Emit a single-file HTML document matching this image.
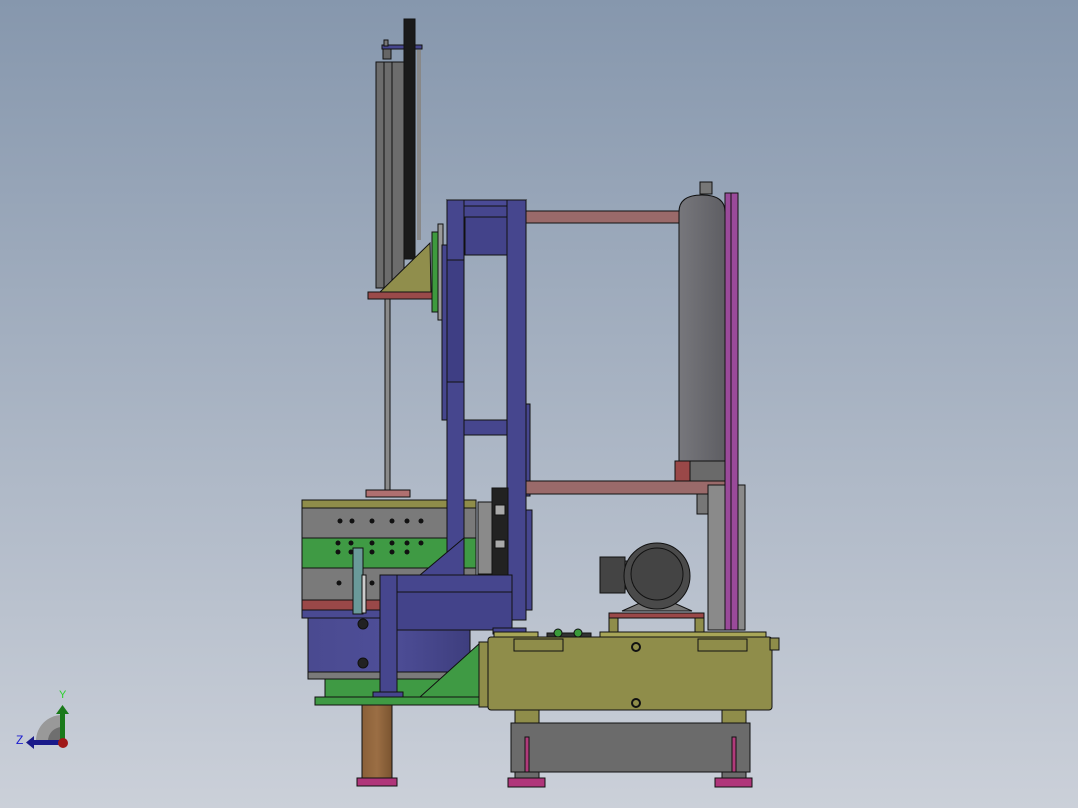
<!DOCTYPE html>
<html><head><meta charset="utf-8"><style>
html,body{margin:0;padding:0;width:1078px;height:808px;overflow:hidden}
svg{display:block}
</style></head><body>
<svg width="1078" height="808" viewBox="0 0 1078 808" xmlns="http://www.w3.org/2000/svg" stroke="#111" stroke-width="1">
<defs>
<linearGradient id="bg" x1="0" y1="0" x2="0" y2="1"><stop offset="0" stop-color="#8697ad"/><stop offset="1" stop-color="#cbd0d9"/></linearGradient>
<linearGradient id="tank" x1="0" y1="0" x2="1" y2="0"><stop offset="0" stop-color="#77777c"/><stop offset="1" stop-color="#5e5e63"/></linearGradient>
<linearGradient id="drum" x1="0" y1="0" x2="1" y2="0"><stop offset="0" stop-color="#4a4a90"/><stop offset="0.5" stop-color="#4e4e98"/><stop offset="1" stop-color="#3e3e7e"/></linearGradient>
<linearGradient id="gray" x1="0" y1="0" x2="1" y2="0"><stop offset="0" stop-color="#6a6a6a"/><stop offset="0.5" stop-color="#7a7a7a"/><stop offset="1" stop-color="#6a6a6a"/></linearGradient>
<linearGradient id="brown" x1="0" y1="0" x2="1" y2="0"><stop offset="0" stop-color="#8a6038"/><stop offset="0.5" stop-color="#9b6e44"/><stop offset="1" stop-color="#7a5430"/></linearGradient>
</defs>
<rect width="1078" height="808" fill="url(#bg)" stroke="none"/>

<!-- cylinder group -->
<rect x="382" y="45" width="40" height="4" fill="#46468e"/>
<rect x="384" y="40" width="4" height="6" fill="#777"/>
<rect x="383" y="49" width="8" height="10" fill="#666"/>
<rect x="376" y="62" width="28" height="226" fill="#6c6c6c"/>
<line x1="384" y1="62" x2="384" y2="288"/><line x1="392" y1="62" x2="392" y2="288"/>
<rect x="404" y="19" width="11" height="240" fill="#1a1a1a"/>
<rect x="417" y="50" width="4" height="190" fill="#888" stroke="none"/>
<rect x="385" y="298" width="5" height="192" fill="#8a8a8a"/>
<polygon points="380,292 430,243 431,292" fill="#908e4c"/>
<rect x="368" y="292" width="64" height="7" fill="#9a4a4a"/>
<rect x="432" y="232" width="6" height="80" fill="#3e9a3e"/>
<rect x="438" y="224" width="5" height="96" fill="#999"/>

<!-- left drum -->
<rect x="366" y="490" width="44" height="7" fill="#b07070"/>
<rect x="302" y="500" width="174" height="8" fill="#8f8d4a"/>
<rect x="302" y="508" width="174" height="30" fill="#7a7a7a"/>
<rect x="302" y="538" width="174" height="30" fill="#3f9a44"/>
<rect x="302" y="568" width="174" height="32" fill="#7a7a7a"/>
<rect x="302" y="600" width="174" height="10" fill="#9a4848"/>
<rect x="302" y="610" width="174" height="8" fill="#4a4a92"/>
<g fill="#111" stroke="none">
<circle cx="340" cy="521" r="2.5"/><circle cx="352" cy="521" r="2.5"/><circle cx="372" cy="521" r="2.5"/><circle cx="392" cy="521" r="2.5"/><circle cx="407" cy="521" r="2.5"/><circle cx="421" cy="521" r="2.5"/>
<circle cx="338" cy="543" r="2.5"/><circle cx="351" cy="543" r="2.5"/><circle cx="372" cy="543" r="2.5"/><circle cx="392" cy="543" r="2.5"/><circle cx="407" cy="543" r="2.5"/><circle cx="421" cy="543" r="2.5"/>
<circle cx="338" cy="552" r="2.5"/><circle cx="351" cy="552" r="2.5"/><circle cx="372" cy="552" r="2.5"/><circle cx="392" cy="552" r="2.5"/><circle cx="407" cy="552" r="2.5"/>
<circle cx="339" cy="583" r="2.5"/><circle cx="372" cy="583" r="2.5"/>
</g>
<rect x="308" y="618" width="162" height="54" fill="url(#drum)"/>
<circle cx="363" cy="624" r="5" fill="#222"/><circle cx="363" cy="663" r="5" fill="#222"/>
<rect x="308" y="672" width="162" height="7" fill="#7a7a7a"/>
<rect x="325" y="679" width="125" height="18" fill="#3f9a44"/>
<rect x="315" y="697" width="170" height="8" fill="#3f9a44"/>
<rect x="353" y="548" width="10" height="66" fill="#6a9a9a"/>
<rect x="362" y="575" width="4" height="38" fill="#ccc"/>
<rect x="362" y="705" width="30" height="75" fill="url(#brown)"/>
<rect x="357" y="778" width="40" height="8" fill="#b0357a"/>

<!-- blue frame -->
<rect x="447" y="200" width="79" height="55" fill="#46468e"/>
<polygon points="447,200 526,200 520,206 453,206" fill="#4a4a96"/>
<rect x="465" y="217" width="42" height="38" fill="#43438a"/>
<rect x="447" y="200" width="17" height="420" fill="#46468e"/>
<rect x="507" y="200" width="19" height="420" fill="#46468e"/>
<line x1="464" y1="255" x2="464" y2="575"/><line x1="507" y1="255" x2="507" y2="575"/>
<rect x="447" y="260" width="17" height="122" fill="#3e3e84"/>
<rect x="442" y="245" width="5" height="175" fill="#46468e"/>
<rect x="464" y="420" width="43" height="15" fill="#46468e"/>
<rect x="526" y="404" width="4" height="92" fill="#46468e"/>
<rect x="526" y="510" width="6" height="100" fill="#46468e"/>
<!-- black/gray brackets -->
<rect x="478" y="502" width="16" height="72" fill="#8a8a8a"/>
<rect x="492" y="488" width="16" height="88" fill="#222"/>
<rect x="495" y="505" width="10" height="10" fill="#aaa"/><rect x="495" y="540" width="10" height="8" fill="#aaa"/>

<!-- blue L structure -->
<polygon points="420,575 464,538 464,575" fill="#46468e"/>
<rect x="380" y="575" width="132" height="55" fill="#46468e"/>
<rect x="397" y="592" width="115" height="38" fill="#43438a"/>
<rect x="380" y="575" width="17" height="120" fill="#46468e"/>
<rect x="373" y="692" width="30" height="5" fill="#46468e"/>
<rect x="493" y="628" width="33" height="6" fill="#46468e"/>
<polygon points="420,697 480,643 488,643 488,697" fill="#3f9a44"/>

<!-- pink beams & tank -->
<rect x="526" y="211" width="199" height="12" fill="#9a6a6a"/>
<rect x="526" y="481" width="199" height="13" fill="#9a6a6a"/>
<rect x="700" y="182" width="12" height="12" fill="#777"/>
<path d="M679,212 Q679,195 702,195 Q725,195 725,212 L725,481 L679,481 Z" fill="url(#tank)"/>
<rect x="690" y="461" width="35" height="20" fill="#6a6a6a"/>
<rect x="675" y="461" width="15" height="20" fill="#9a4848"/>
<rect x="697" y="494" width="28" height="20" fill="#777"/>
<rect x="708" y="485" width="37" height="145" fill="#8a8a8a"/>
<rect x="725" y="193" width="13" height="437" fill="#9a4a9a"/>
<line x1="731" y1="193" x2="731" y2="630"/>

<!-- motor -->
<rect x="609" y="613" width="95" height="5" fill="#9a4848"/>
<rect x="609" y="618" width="9" height="16" fill="#8f8d4a"/><rect x="695" y="618" width="9" height="16" fill="#8f8d4a"/>
<polygon points="622,611 640,603 674,603 692,611" fill="#777"/>
<rect x="600" y="557" width="25" height="36" fill="#444"/>
<rect x="625" y="561" width="4" height="28" fill="#555"/>
<circle cx="657" cy="576" r="33" fill="#4a4a4a"/>
<circle cx="657" cy="574" r="26" fill="#444"/>

<!-- yellow tank -->
<rect x="494" y="632" width="44" height="8" fill="#a8a658"/>
<rect x="547" y="633" width="44" height="6" fill="#333"/>
<circle cx="558" cy="633" r="4" fill="#3a9a3a"/><circle cx="578" cy="633" r="4" fill="#3a9a3a"/>
<rect x="600" y="632" width="166" height="8" fill="#a8a658"/>
<rect x="479" y="642" width="10" height="65" fill="#8f8d4a"/>
<rect x="488" y="637" width="284" height="73" fill="#8f8d4a" rx="3"/>
<rect x="514" y="639" width="49" height="12" fill="#8f8d4a"/>
<rect x="698" y="639" width="49" height="12" fill="#8f8d4a"/>
<rect x="770" y="638" width="9" height="12" fill="#8f8d4a"/>
<circle cx="636" cy="647" r="4" fill="none" stroke-width="2"/>
<circle cx="636" cy="703" r="4" fill="none" stroke-width="2"/>

<!-- lower frame -->
<rect x="515" y="710" width="24" height="13" fill="#8f8d4a"/><rect x="722" y="710" width="24" height="13" fill="#8f8d4a"/>
<rect x="511" y="723" width="239" height="49" fill="#6b6b6b"/>
<rect x="525" y="737" width="4" height="35" fill="#b03a7a"/><rect x="732" y="737" width="4" height="35" fill="#b03a7a"/>
<rect x="515" y="772" width="24" height="8" fill="#6b6b6b"/><rect x="722" y="772" width="24" height="8" fill="#6b6b6b"/>
<rect x="508" y="778" width="37" height="9" fill="#b0357a"/><rect x="715" y="778" width="37" height="9" fill="#b0357a"/>

<!-- triad -->
<g stroke="none">
<path d="M36,741 A26,26 0 0 1 62,715 L62,741 Z" fill="#999"/>
<path d="M48,741 A14,14 0 0 1 62,727 L62,741 Z" fill="#6f6f6f"/>
<rect x="60" y="713" width="5" height="28" fill="#1a7a1a"/>
<polygon points="56,714 69,714 62.5,705" fill="#1a7a1a"/>
<rect x="33" y="740" width="28" height="5" fill="#1a1a8a"/>
<polygon points="34,736 34,749 26,742.5" fill="#1a1a8a"/>
<circle cx="63" cy="743" r="5" fill="#a01818"/>
</g>
<text x="59" y="698" font-family="Liberation Sans, sans-serif" font-size="11" fill="#2ad02a" stroke="none">Y</text>
<text x="16" y="744" font-family="Liberation Sans, sans-serif" font-size="12" fill="#1a1ad0" stroke="none">Z</text>
</svg>
</body></html>
